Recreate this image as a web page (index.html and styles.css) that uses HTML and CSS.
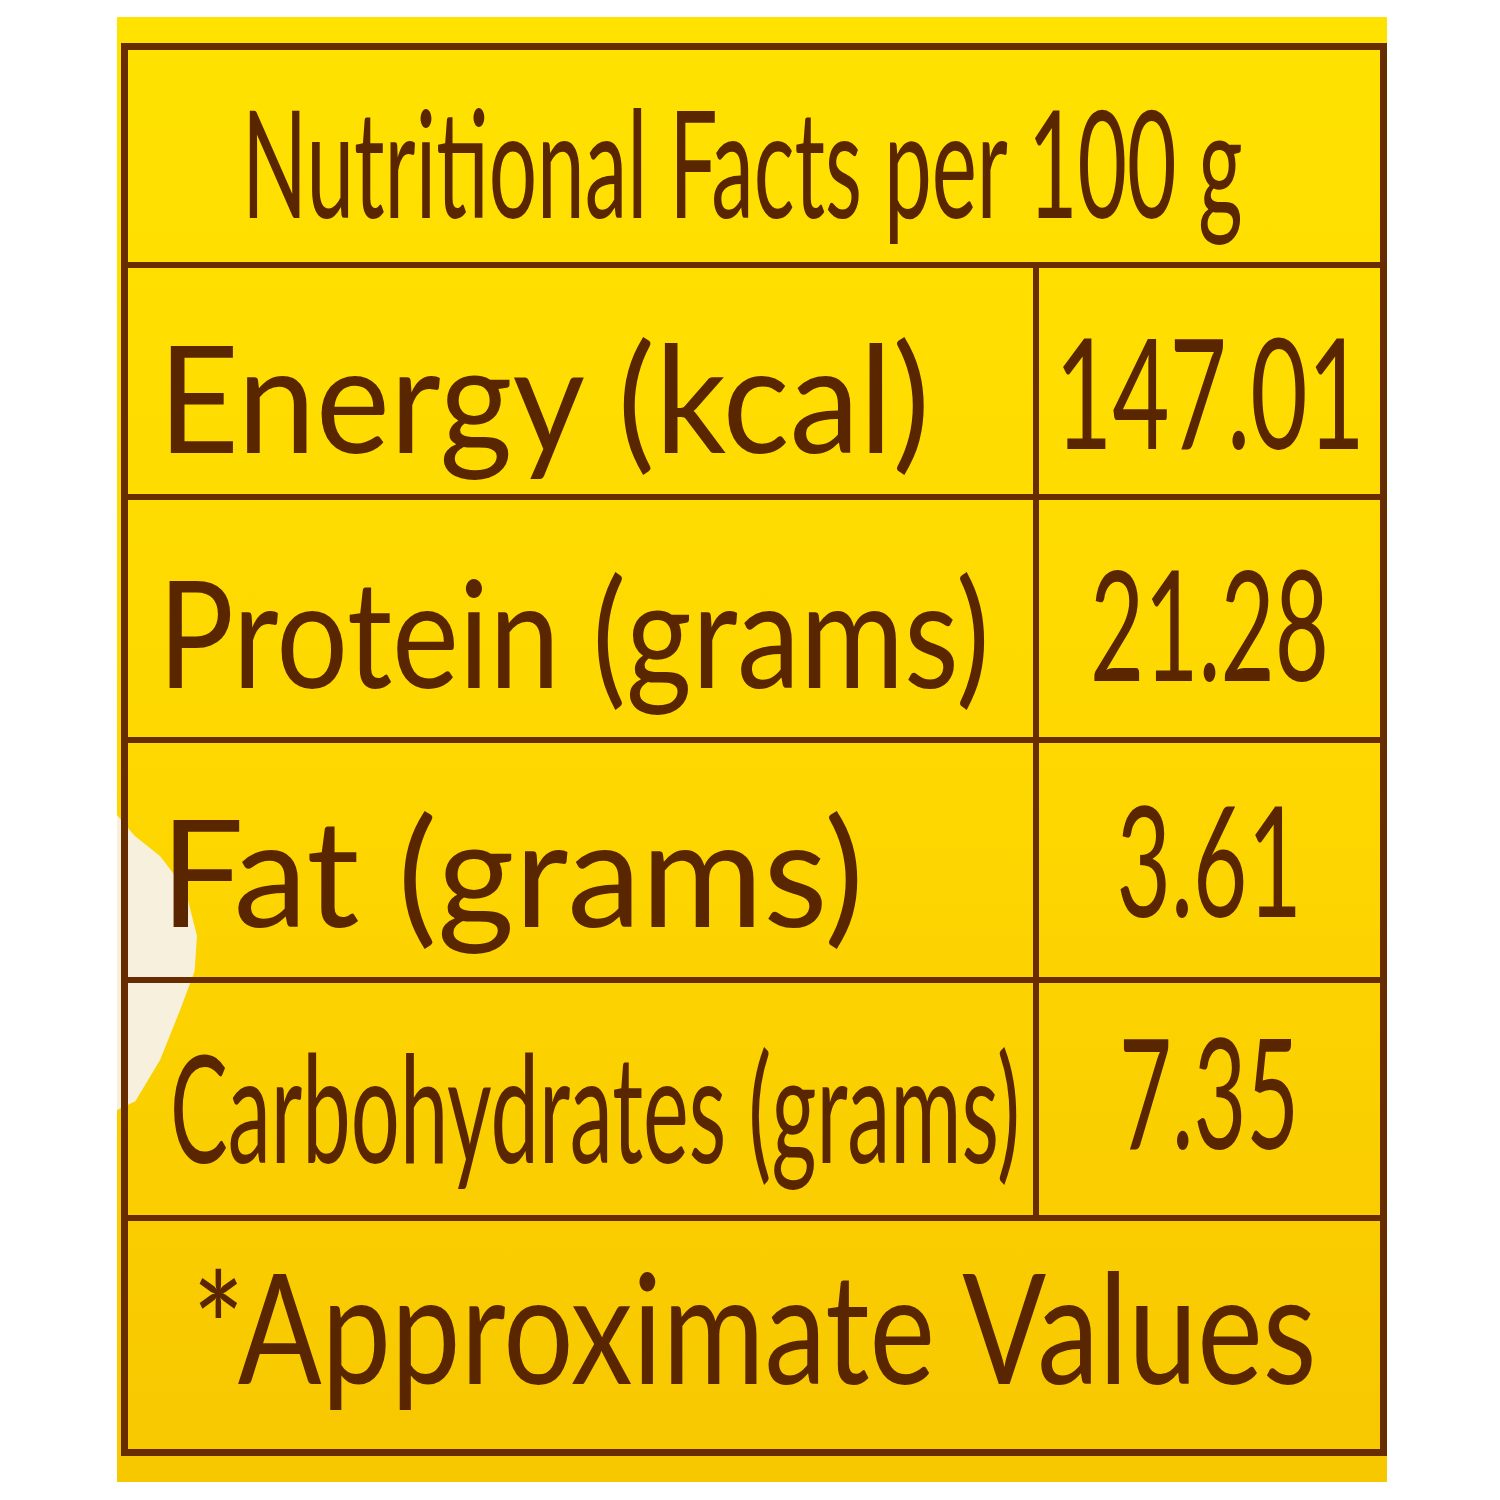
FILE: index.html
```html
<!DOCTYPE html>
<html lang="en">

<head>
    <meta charset="UTF-8">
    <meta name="viewport" content="width=device-width, initial-scale=1.0">
    <title>Nutritional Facts</title>
    <link rel="stylesheet" href="styles.css">
</head>

<body>
    <div class="label">
        <div class="chip"></div>
        <div class="facts">
            <div class="title"><span class="txt">Nutritional Facts per 100 g</span></div>
            <div class="row energy">
                <div class="name"><span class="txt">Energy (kcal)</span></div>
                <div class="value"><span class="txt">147.01</span></div>
            </div>
            <div class="row protein">
                <div class="name"><span class="txt">Protein (grams)</span></div>
                <div class="value"><span class="txt">21.28</span></div>
            </div>
            <div class="row fat">
                <div class="name"><span class="txt">Fat (grams)</span></div>
                <div class="value"><span class="txt">3.61</span></div>
            </div>
            <div class="row carbs">
                <div class="name"><span class="txt">Carbohydrates (grams)</span></div>
                <div class="value"><span class="txt">7.35</span></div>
            </div>
            <div class="note"><span class="txt">*Approximate Values</span></div>
        </div>
    </div>
</body>

</html>
```

FILE: styles.css
```css
body {
    margin: 0;
    background-color: #fff;
    font-family: Lato, "Open Sans", sans-serif;
    color: #5a2600;
    overflow: hidden;
}

.label {
    position: relative;
    box-sizing: border-box;
    width: 1270px;
    height: 1465px;
    margin: 17px 0 0 117px;
    padding: 26px 0 0 4px;
    background-image: linear-gradient(180deg, #ffe200 0%, #fed800 50%, #f7c700 100%);
}

.chip {
    position: absolute;
    left: 0;
    top: 798px;
    width: 80px;
    height: 295px;
    background-color: #f6f0dc;
    clip-path: polygon(0 0, 22% 7%, 54% 14%, 85% 25%, 100% 41%, 97% 53%, 79% 66%, 54% 83%, 23% 97%, 0 100%);
}

.facts {
    position: relative;
    z-index: 1;
    border: 7px solid #672c00;
}

.txt {
    display: inline-block;
    flex: none;
    font-size: 150px;
    line-height: 1;
    white-space: nowrap;
    transform-origin: left bottom;
}

.title {
    box-sizing: border-box;
    height: 218px;
    border-bottom: 6px solid #672c00;
    display: flex;
    align-items: flex-end;
    padding: 0 0 27px 114px;
    overflow: hidden;
}

.title .txt {
    transform: scaleX(0.569);
}

.row {
    display: grid;
    grid-template-columns: minmax(0, 1fr) 347px;
    border-bottom: 6px solid #672c00;
}

.name {
    display: flex;
    align-items: flex-end;
    padding-left: 30px;
    min-width: 0;
}

.value {
    display: flex;
    align-items: flex-end;
    justify-content: center;
    border-left: 6px solid #672c00;
    min-width: 0;
}

.value .txt {
    font-size: 153px;
    transform-origin: center bottom;
}

.energy { height: 226px; }
.protein { height: 237px; }
.fat { height: 234px; }
.carbs { height: 232px; }

.energy .name { padding-bottom: 24px; }
.energy .name .txt { transform: scaleX(0.937); }
.energy .value { padding-bottom: 27px; }
.energy .value .txt { transform: scaleX(0.646); }

.protein .name { padding-bottom: 32px; }
.protein .name .txt { transform: scaleX(0.844); }
.protein .value { padding-bottom: 38px; }
.protein .value .txt { transform: scaleX(0.611); }

.fat .name { padding-bottom: 33px; padding-left: 32px; }
.fat .name .txt { transform: scaleX(0.99); }
.fat .value { padding-bottom: 42px; }
.fat .value .txt { transform: scaleX(0.613); }

.carbs .name { padding-bottom: 35px; padding-left: 42px; }
.carbs .name .txt { transform: scaleX(0.577); }
.carbs .value { padding-bottom: 48px; }
.carbs .value .txt { transform: scaleX(0.596); }

.note {
    box-sizing: border-box;
    height: 228px;
    display: flex;
    align-items: flex-end;
    padding: 0 0 47px 64px;
    overflow: hidden;
}

.note .txt {
    font-size: 153px;
    transform: scaleX(0.811);
}
```
